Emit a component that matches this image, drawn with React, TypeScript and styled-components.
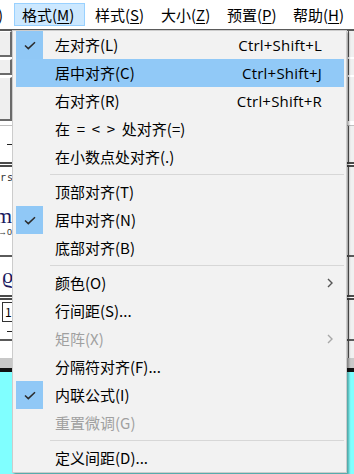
import styled, { createGlobalStyle } from "styled-components";

const GlobalStyle = createGlobalStyle`
  html, body {
    margin: 0;
    padding: 0;
    width: 354px;
    height: 474px;
    overflow: hidden;
    background: #ffffff;
  }
  body {
    font-family: "Noto Sans CJK SC", "Noto Sans", sans-serif;
  }
`;

type Entry =
  | { kind: "sep" }
  | {
      kind: "item";
      label: string;
      shortcut?: string;
      checked?: boolean;
      active?: boolean;
      disabled?: boolean;
      submenu?: boolean;
    };

const entries: Entry[] = [
  { kind: "item", label: "左对齐(L)", shortcut: "Ctrl+Shift+L", checked: true },
  { kind: "item", label: "居中对齐(C)", shortcut: "Ctrl+Shift+J", active: true },
  { kind: "item", label: "右对齐(R)", shortcut: "Ctrl+Shift+R" },
  { kind: "item", label: "在  =  <  >  处对齐(=)" },
  { kind: "item", label: "在小数点处对齐(.)" },
  { kind: "sep" },
  { kind: "item", label: "顶部对齐(T)" },
  { kind: "item", label: "居中对齐(N)", checked: true },
  { kind: "item", label: "底部对齐(B)" },
  { kind: "sep" },
  { kind: "item", label: "颜色(O)", submenu: true },
  { kind: "item", label: "行间距(S)..." },
  { kind: "item", label: "矩阵(X)", submenu: true, disabled: true },
  { kind: "item", label: "分隔符对齐(F)..." },
  { kind: "item", label: "内联公式(I)", checked: true },
  { kind: "item", label: "重置微调(G)", disabled: true },
  { kind: "sep" },
  { kind: "item", label: "定义间距(D)..." },
];

const menuBar = [
  { text: "格式(", key: "M", open: true, w: 71 },
  { text: "样式(", key: "S", w: 66 },
  { text: "大小(", key: "Z", w: 66 },
  { text: "预置(", key: "P", w: 66 },
  { text: "帮助(", key: "H", w: 66 },
];

const CheckIcon = () => (
  <svg width="12" height="9" viewBox="0 0 12 9">
    <path d="M1 4.5 L4.3 7.6 L11 1.2" fill="none" stroke="#2b2b2b" strokeWidth="1.5" />
  </svg>
);

const Chevron = ({ dim }: { dim?: boolean }) => (
  <svg width="6" height="10" viewBox="0 0 6 10">
    <path d="M1 1 L5 5 L1 9" fill="none" stroke={dim ? "#a8a8a8" : "#555555"} strokeWidth="1.4" />
  </svg>
);

const App = () => {
  return (
    <Screen>
      <GlobalStyle />
      <MenuBar>
        <PrevTail>
          <span>)</span>
        </PrevTail>
        {menuBar.map((m, i) => (
          <BarItem key={i} $open={m.open} $w={m.w}>
            {m.text}
            <u>{m.key}</u>)
          </BarItem>
        ))}
      </MenuBar>
      <Backdrop>
        <DarkRule />
        <ToolRow $h={26}>
          <RaisedButton />
          <RightEdge />
        </ToolRow>
        <Gap $h={2} />
        <ToolRow $h={16}>
          <RaisedButton />
          <RightEdge />
        </ToolRow>
        <Gap $h={2} />
        <ToolRow $h={44}>
          <RaisedButton />
          <RightEdge />
        </ToolRow>
        <LightRule />
        <PlainRow $h={36}>
          <Dash />
          <RightEdge />
        </PlainRow>
        <DoubleRule />
        <PlainRow $h={20}>
          <TinyText>rs</TinyText>
          <RightEdge />
        </PlainRow>
        <PlainRow $h={68}>
          <GlyphStack>
            <Glyph>m</Glyph>
            <SmallGlyph>→0</SmallGlyph>
          </GlyphStack>
          <RightEdge />
        </PlainRow>
        <DarkRule />
        <PlainRow $h={38}>
          <Glyph>ϱ</Glyph>
          <RightEdge />
        </PlainRow>
        <DoubleRule />
        <PlainRow $h={23}>
          <FieldBox>1</FieldBox>
          <RightEdge />
        </PlainRow>
        <PlainRow $h={16}>
          <Dash />
          <RightEdge />
        </PlainRow>
        <DarkRule />
        <PlainRow $h={17}>
          <span />
          <RightEdge />
        </PlainRow>
        <GreyBand />
        <BlackRule />
        <Canvas />
      </Backdrop>

      <Dropdown>
        {entries.map((e, i) =>
          e.kind === "sep" ? (
            <Separator key={i} />
          ) : (
            <Item key={i} $active={e.active} $disabled={e.disabled}>
              <CheckCell $on={e.checked}>{e.checked && <CheckIcon />}</CheckCell>
              <Label>{e.label}</Label>
              <Shortcut>{e.shortcut}</Shortcut>
              <ArrowCell>{e.submenu && <Chevron dim={e.disabled} />}</ArrowCell>
            </Item>
          )
        )}
      </Dropdown>
    </Screen>
  );
};

export default App;

const Screen = styled.div`
  position: relative;
  width: 354px;
  height: 474px;
  overflow: hidden;
  display: flex;
  flex-direction: column;
  background: #ffffff;
`;

const MenuBar = styled.div`
  display: flex;
  align-items: center;
  height: 29px;
  flex: none;
  background: #ffffff;
  font-size: 15px;
  color: #000000;
`;

const PrevTail = styled.div`
  width: 14px;
  height: 22px;
  overflow: hidden;
  line-height: 22px;

  span {
    display: inline-block;
    margin-left: -2px;
  }
`;

const BarItem = styled.div<{ $open?: boolean; $w: number }>`
  display: flex;
  align-items: center;
  flex: none;
  box-sizing: border-box;
  width: ${({ $w }) => $w}px;
  height: 23px;
  margin-right: ${({ $open }) => ($open ? "2px" : "0")};
  padding-left: 7px;
  background: ${({ $open }) => ($open ? "#cce8ff" : "transparent")};
  border: 1px solid ${({ $open }) => ($open ? "#99d1ff" : "transparent")};
  white-space: pre;
  overflow: hidden;
  line-height: 22px;

  u {
    text-underline-offset: 2px;
  }
`;

const Backdrop = styled.div`
  flex: 1;
  display: flex;
  flex-direction: column;
  background: #ffffff;
`;

const Gap = styled.div<{ $h: number }>`
  height: ${({ $h }) => $h}px;
  flex: none;
`;

const DarkRule = styled.div`
  height: 2px;
  flex: none;
  background: #5a5a5a;
`;

const LightRule = styled.div`
  height: 5px;
  flex: none;
  border-bottom: 1px solid #c0c0c0;
  box-sizing: border-box;
`;

const BlackRule = styled.div`
  height: 4px;
  flex: none;
  background: #111111;
`;

const DoubleRule = styled.div`
  height: 5px;
  flex: none;
  border-top: 2px solid #4a4a4a;
  border-bottom: 2px solid #4a4a4a;
  box-sizing: border-box;
`;

const ToolRow = styled.div<{ $h: number }>`
  height: ${({ $h }) => $h}px;
  flex: none;
  display: flex;
  justify-content: space-between;
  background: #ffffff;
`;

const PlainRow = styled.div<{ $h: number }>`
  height: ${({ $h }) => $h}px;
  flex: none;
  display: flex;
  align-items: center;
  justify-content: space-between;
`;

const RaisedButton = styled.div`
  width: 10px;
  background: #efefef;
  border-top: 1px solid #ffffff;
  border-right: 2px solid #6a6a6a;
  border-bottom: 2px solid #6a6a6a;
`;

const RightEdge = styled.div`
  width: 5px;
  align-self: stretch;
  border-left: 1px solid #5a5a5a;
  background: #f0f0f0;
`;

const Dash = styled.div`
  width: 5px;
  height: 1px;
  margin-left: 7px;
  background: #222222;
`;

const TinyText = styled.div`
  font-family: "DejaVu Sans Mono", monospace;
  font-size: 10px;
  color: #333333;
  letter-spacing: 1px;
`;

const GlyphStack = styled.div`
  display: flex;
  flex-direction: column;
  align-items: flex-end;
  width: 12px;
  overflow: hidden;
`;

const Glyph = styled.div`
  font-family: "Liberation Serif", serif;
  font-size: 22px;
  line-height: 22px;
  color: #1a1a60;
  margin-left: 2px;
`;

const SmallGlyph = styled.div`
  font-family: "Liberation Sans", sans-serif;
  font-size: 9px;
  color: #333333;
  white-space: nowrap;
`;

const FieldBox = styled.div`
  width: 10px;
  height: 18px;
  margin-left: 2px;
  border: 1px solid #333333;
  font-size: 12px;
  line-height: 18px;
  padding-left: 2px;
`;

const GreyBand = styled.div`
  height: 10px;
  flex: none;
  background: #c8c8c8;
`;

const Canvas = styled.div`
  flex: 1;
  background: #80ffff;
`;

const Dropdown = styled.div`
  position: absolute;
  left: 12px;
  top: 30px;
  width: 333px;
  background: #f2f2f2;
  border: 1px solid #cccccc;
  box-shadow: 2px 2px 2px rgba(0, 0, 0, 0.35);
  display: flex;
  flex-direction: column;
  font-size: 15px;
`;

const Item = styled.div<{ $active?: boolean; $disabled?: boolean }>`
  display: flex;
  align-items: center;
  height: 28px;
  margin: 0 2px 0 3px;
  background: ${({ $active }) => ($active ? "#91c9f7" : "transparent")};
  color: ${({ $disabled }) => ($disabled ? "#a0a0a0" : "#000000")};
`;

const CheckCell = styled.div<{ $on?: boolean }>`
  width: 27px;
  height: 28px;
  display: flex;
  align-items: center;
  justify-content: center;
  background: ${({ $on }) => ($on ? "#90c8f6" : "transparent")};
`;

const Label = styled.div`
  flex: 1;
  margin-left: 12px;
  white-space: pre;
  line-height: 28px;
`;

const Shortcut = styled.div`
  font-family: "Open Sans", "Noto Sans", sans-serif;
  font-size: 15px;
  letter-spacing: 0.2px;
  line-height: 28px;
`;

const ArrowCell = styled.div`
  width: 22px;
  display: flex;
  justify-content: flex-end;
  padding-right: 11px;
  box-sizing: border-box;
`;

const Separator = styled.div`
  height: 7px;
  flex: none;
  display: flex;
  align-items: center;
  margin-left: 37px;
  margin-right: 2px;

  &::after {
    content: "";
    flex: 1;
    height: 1px;
    background: #d7d7d7;
  }
`;
